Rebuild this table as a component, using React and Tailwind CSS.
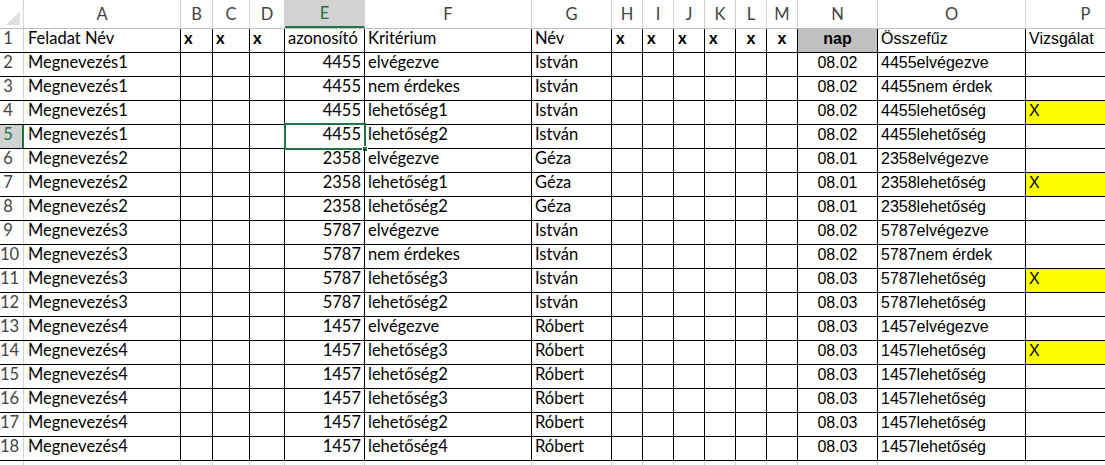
import React from 'react';

const cols = [
    { key: 'A', w: 'w-[157px]' },
    { key: 'B', w: 'w-[32px]' },
    { key: 'C', w: 'w-[37px]' },
    { key: 'D', w: 'w-[35px]' },
    { key: 'E', w: 'w-[80px]' },
    { key: 'F', w: 'w-[167px]' },
    { key: 'G', w: 'w-[80px]' },
    { key: 'H', w: 'w-[31px]' },
    { key: 'I', w: 'w-[31px]' },
    { key: 'J', w: 'w-[31px]' },
    { key: 'K', w: 'w-[31px]' },
    { key: 'L', w: 'w-[31px]' },
    { key: 'M', w: 'w-[31px]' },
    { key: 'N', w: 'w-[80px]' },
    { key: 'O', w: 'w-[148px]' },
    { key: 'P', w: 'w-[120px]' },
];

const calibri = "font-['Lato','Carlito',sans-serif] text-[16.5px]";
const arial = "font-['Liberation_Sans',Arial,sans-serif] text-[16px]";

const rows = [
    ['Megnevezés1', '4455', 'elvégezve', 'István', '08.02', '4455elvégezve', ''],
    ['Megnevezés1', '4455', 'nem érdekes', 'István', '08.02', '4455nem érdek', ''],
    ['Megnevezés1', '4455', 'lehetőség1', 'István', '08.02', '4455lehetőség', 'X'],
    ['Megnevezés1', '4455', 'lehetőség2', 'István', '08.02', '4455lehetőség', ''],
    ['Megnevezés2', '2358', 'elvégezve', 'Géza', '08.01', '2358elvégezve', ''],
    ['Megnevezés2', '2358', 'lehetőség1', 'Géza', '08.01', '2358lehetőség', 'X'],
    ['Megnevezés2', '2358', 'lehetőség2', 'Géza', '08.01', '2358lehetőség', ''],
    ['Megnevezés3', '5787', 'elvégezve', 'István', '08.02', '5787elvégezve', ''],
    ['Megnevezés3', '5787', 'nem érdekes', 'István', '08.02', '5787nem érdek', ''],
    ['Megnevezés3', '5787', 'lehetőség3', 'István', '08.03', '5787lehetőség', 'X'],
    ['Megnevezés3', '5787', 'lehetőség2', 'István', '08.03', '5787lehetőség', ''],
    ['Megnevezés4', '1457', 'elvégezve', 'Róbert', '08.03', '1457elvégezve', ''],
    ['Megnevezés4', '1457', 'lehetőség3', 'Róbert', '08.03', '1457lehetőség', 'X'],
    ['Megnevezés4', '1457', 'lehetőség2', 'Róbert', '08.03', '1457lehetőség', ''],
    ['Megnevezés4', '1457', 'lehetőség3', 'Róbert', '08.03', '1457lehetőség', ''],
    ['Megnevezés4', '1457', 'lehetőség2', 'Róbert', '08.03', '1457lehetőség', ''],
    ['Megnevezés4', '1457', 'lehetőség4', 'Róbert', '08.03', '1457lehetőség', ''],
];

const Cell = ({ w, className = '', children }) => (
    <div className={`${w} shrink-0 h-full border-r border-black flex items-end pb-[1px] overflow-hidden whitespace-nowrap ${className}`}>
        {children}
    </div>
);

const RowHead = ({ n, active }) => (
    <div className={`w-[24px] shrink-0 h-full flex items-end pb-[1px] overflow-visible ${active ? 'bg-[#d2d2d2] text-[#217346] border-r-2 border-[#217346]' : 'border-r border-[#d4d4d4] text-[#444]'}`}>
        <div className={`w-[16px] text-center ${calibri}`}>{n}</div>
    </div>
);

const App = () => {
    return (
        <div className="w-[1105px] h-[465px] overflow-hidden bg-white text-black select-none">
            {/* column letters */}
            <div className="flex h-[29px] border-b border-[#bfbfbf]">
                <div className="w-[24px] shrink-0 h-full border-r border-[#d4d4d4] flex items-end justify-end p-[3px]">
                    <svg width="14" height="14" viewBox="0 0 14 14"><polygon points="14,0 14,14 0,14" fill="#dfdfdf" /></svg>
                </div>
                {cols.map(c => (
                    <div key={c.key} className={`${c.w} shrink-0 h-full border-r border-[#d4d4d4] flex items-center justify-center ${calibri} ${c.key === 'E' ? 'bg-[#d2d2d2] text-[#217346] border-b-2 border-b-[#217346]' : 'text-[#444]'}`}>
                        {c.key}
                    </div>
                ))}
            </div>

            {/* row 1 */}
            <div className="flex h-[24px] border-b border-black">
                <RowHead n={1} />
                <Cell w="w-[157px]" className={`pl-[4px] ${calibri}`}>Feladat Név</Cell>
                <Cell w="w-[32px]" className={`pl-[3px] font-bold ${calibri}`}>x</Cell>
                <Cell w="w-[37px]" className={`pl-[3px] font-bold ${calibri}`}>x</Cell>
                <Cell w="w-[35px]" className={`pl-[3px] font-bold ${calibri}`}>x</Cell>
                <Cell w="w-[80px]" className={`pl-[3px] ${calibri}`}>azonosító</Cell>
                <Cell w="w-[167px]" className={`pl-[3px] ${calibri}`}>Kritérium</Cell>
                <Cell w="w-[80px]" className={`pl-[3px] ${calibri}`}>Név</Cell>
                <Cell w="w-[31px]" className={`pl-[4px] font-bold ${calibri}`}>x</Cell>
                <Cell w="w-[31px]" className={`pl-[4px] font-bold ${calibri}`}>x</Cell>
                <Cell w="w-[31px]" className={`pl-[4px] font-bold ${calibri}`}>x</Cell>
                <Cell w="w-[31px]" className={`pl-[4px] font-bold ${calibri}`}>x</Cell>
                <Cell w="w-[31px]" className={`justify-center font-bold ${arial}`}>x</Cell>
                <Cell w="w-[31px]" className={`justify-center font-bold ${arial}`}>x</Cell>
                <Cell w="w-[80px]" className={`justify-center font-bold bg-[#c0c0c0] ${arial}`}>nap</Cell>
                <Cell w="w-[148px]" className={`pl-[3px] ${arial}`}>Összefűz</Cell>
                <Cell w="w-[120px]" className={`pl-[3px] border-r-0 ${arial}`}>Vizsgálat</Cell>
            </div>

            {rows.map((r, i) => {
                const n = i + 2;
                const sel = n === 5;
                return (
                    <div key={n} className="flex h-[24px] border-b border-black">
                        <RowHead n={n} active={sel} />
                        <Cell w="w-[157px]" className={`pl-[4px] ${calibri}`}>{r[0]}</Cell>
                        <Cell w="w-[32px]" />
                        <Cell w="w-[37px]" />
                        <Cell w="w-[35px]" />
                        <div className={`w-[80px] shrink-0 h-full border-r border-black flex items-end justify-end pb-[1px] pr-[3px] relative ${calibri}`}>
                            {r[1]}
                            {sel && (
                                <>
                                    <div className="absolute top-[-2px] left-[-1px] right-[-2px] bottom-[-2px] border-2 border-[#217346]" />
                                    <div className="absolute right-[-4px] bottom-[-4px] w-[6px] h-[6px] bg-[#217346] border border-white" />
                                </>
                            )}
                        </div>
                        <Cell w="w-[167px]" className={`pl-[3px] ${calibri}`}>{r[2]}</Cell>
                        <Cell w="w-[80px]" className={`pl-[3px] ${calibri}`}>{r[3]}</Cell>
                        <Cell w="w-[31px]" />
                        <Cell w="w-[31px]" />
                        <Cell w="w-[31px]" />
                        <Cell w="w-[31px]" />
                        <Cell w="w-[31px]" />
                        <Cell w="w-[31px]" />
                        <Cell w="w-[80px]" className={`justify-center ${arial}`}>{r[4]}</Cell>
                        <Cell w="w-[148px]" className={`pl-[3px] ${arial}`}>{r[5]}</Cell>
                        <Cell w="w-[120px]" className={`pl-[3px] border-r-0 ${arial} ${r[6] ? 'bg-[#ffff00]' : ''}`}>{r[6]}</Cell>
                    </div>
                );
            })}

            {/* row 19, partly visible */}
            <div className="flex h-[24px]">
                <div className="w-[24px] shrink-0 h-full border-r border-[#d4d4d4]" />
                {cols.map(c => (
                    <div key={c.key} className={`${c.w} shrink-0 h-full border-r border-[#d4d4d4]`} />
                ))}
            </div>
        </div>
    );
};

export default App;
